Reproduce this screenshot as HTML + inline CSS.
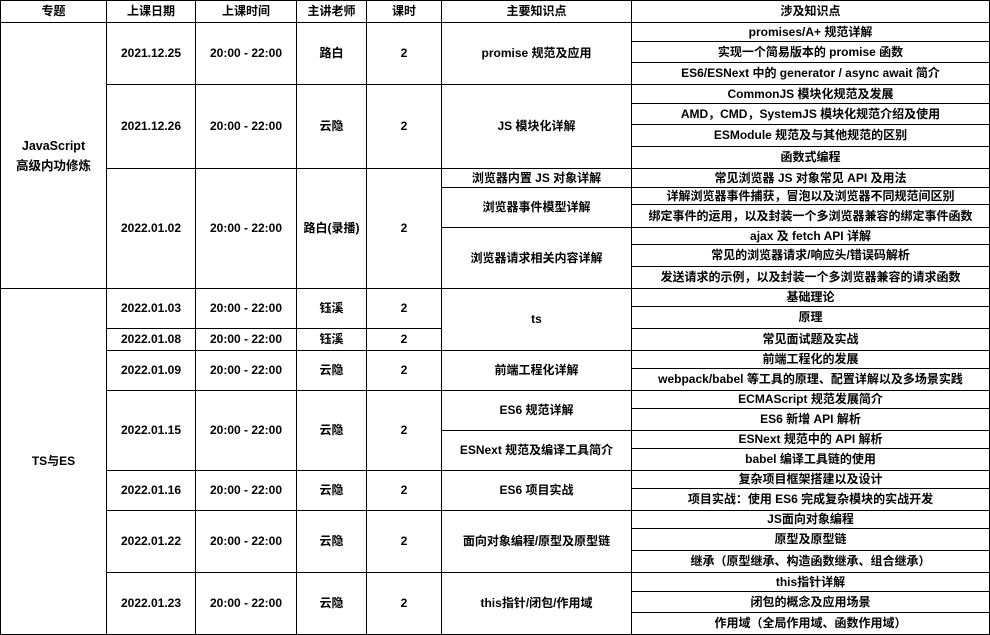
<!DOCTYPE html>
<html><head><meta charset="utf-8"><style>
body{margin:0;width:990px;height:635px;background:#fff;position:relative;overflow:hidden;font-family:"Liberation Sans","Noto Sans CJK SC",sans-serif;font-weight:bold;font-size:12px;color:#000}
.c{position:absolute;border:1px solid #000;box-sizing:border-box;display:flex;align-items:center;justify-content:center;text-align:center;line-height:19px;white-space:nowrap}
</style></head><body>
<!-- header -->
<div class="c" style="left:0;top:0;width:107px;height:23px">专题</div>
<div class="c" style="left:106px;top:0;width:90px;height:23px">上课日期</div>
<div class="c" style="left:195px;top:0;width:102px;height:23px">上课时间</div>
<div class="c" style="left:296px;top:0;width:71px;height:23px">主讲老师</div>
<div class="c" style="left:366px;top:0;width:76px;height:23px">课时</div>
<div class="c" style="left:441px;top:0;width:191px;height:23px">主要知识点</div>
<div class="c" style="left:631px;top:0;width:359px;height:23px">涉及知识点</div>
<!-- topics -->
<div class="c" style="left:0;top:22px;width:107px;height:267px;font-size:12.5px;line-height:20px">JavaScript<br>高级内功修炼</div>
<div class="c" style="left:0;top:288px;width:107px;height:347px">TS与ES</div>
<!-- date rows -->
<div class="c" style="left:106px;top:22px;width:90px;height:63px">2021.12.25</div>
<div class="c" style="left:195px;top:22px;width:102px;height:63px">20:00 - 22:00</div>
<div class="c" style="left:296px;top:22px;width:71px;height:63px">路白</div>
<div class="c" style="left:366px;top:22px;width:76px;height:63px">2</div>
<div class="c" style="left:106px;top:84px;width:90px;height:85px">2021.12.26</div>
<div class="c" style="left:195px;top:84px;width:102px;height:85px">20:00 - 22:00</div>
<div class="c" style="left:296px;top:84px;width:71px;height:85px">云隐</div>
<div class="c" style="left:366px;top:84px;width:76px;height:85px">2</div>
<div class="c" style="left:106px;top:168px;width:90px;height:121px">2022.01.02</div>
<div class="c" style="left:195px;top:168px;width:102px;height:121px">20:00 - 22:00</div>
<div class="c" style="left:296px;top:168px;width:71px;height:121px">路白(录播)</div>
<div class="c" style="left:366px;top:168px;width:76px;height:121px">2</div>
<div class="c" style="left:106px;top:288px;width:90px;height:41px">2022.01.03</div>
<div class="c" style="left:195px;top:288px;width:102px;height:41px">20:00 - 22:00</div>
<div class="c" style="left:296px;top:288px;width:71px;height:41px">钰溪</div>
<div class="c" style="left:366px;top:288px;width:76px;height:41px">2</div>
<div class="c" style="left:106px;top:328px;width:90px;height:23px">2022.01.08</div>
<div class="c" style="left:195px;top:328px;width:102px;height:23px">20:00 - 22:00</div>
<div class="c" style="left:296px;top:328px;width:71px;height:23px">钰溪</div>
<div class="c" style="left:366px;top:328px;width:76px;height:23px">2</div>
<div class="c" style="left:106px;top:350px;width:90px;height:41px">2022.01.09</div>
<div class="c" style="left:195px;top:350px;width:102px;height:41px">20:00 - 22:00</div>
<div class="c" style="left:296px;top:350px;width:71px;height:41px">云隐</div>
<div class="c" style="left:366px;top:350px;width:76px;height:41px">2</div>
<div class="c" style="left:106px;top:390px;width:90px;height:81px">2022.01.15</div>
<div class="c" style="left:195px;top:390px;width:102px;height:81px">20:00 - 22:00</div>
<div class="c" style="left:296px;top:390px;width:71px;height:81px">云隐</div>
<div class="c" style="left:366px;top:390px;width:76px;height:81px">2</div>
<div class="c" style="left:106px;top:470px;width:90px;height:41px">2022.01.16</div>
<div class="c" style="left:195px;top:470px;width:102px;height:41px">20:00 - 22:00</div>
<div class="c" style="left:296px;top:470px;width:71px;height:41px">云隐</div>
<div class="c" style="left:366px;top:470px;width:76px;height:41px">2</div>
<div class="c" style="left:106px;top:510px;width:90px;height:63px">2022.01.22</div>
<div class="c" style="left:195px;top:510px;width:102px;height:63px">20:00 - 22:00</div>
<div class="c" style="left:296px;top:510px;width:71px;height:63px">云隐</div>
<div class="c" style="left:366px;top:510px;width:76px;height:63px">2</div>
<div class="c" style="left:106px;top:572px;width:90px;height:63px">2022.01.23</div>
<div class="c" style="left:195px;top:572px;width:102px;height:63px">20:00 - 22:00</div>
<div class="c" style="left:296px;top:572px;width:71px;height:63px">云隐</div>
<div class="c" style="left:366px;top:572px;width:76px;height:63px">2</div>
<!-- main knowledge -->
<div class="c" style="left:441px;top:22px;width:191px;height:63px">promise 规范及应用</div>
<div class="c" style="left:441px;top:84px;width:191px;height:85px">JS 模块化详解</div>
<div class="c" style="left:441px;top:168px;width:191px;height:20px">浏览器内置 JS 对象详解</div>
<div class="c" style="left:441px;top:187px;width:191px;height:41px">浏览器事件模型详解</div>
<div class="c" style="left:441px;top:227px;width:191px;height:62px">浏览器请求相关内容详解</div>
<div class="c" style="left:441px;top:288px;width:191px;height:63px">ts</div>
<div class="c" style="left:441px;top:350px;width:191px;height:41px">前端工程化详解</div>
<div class="c" style="left:441px;top:390px;width:191px;height:41px">ES6 规范详解</div>
<div class="c" style="left:441px;top:430px;width:191px;height:41px">ESNext 规范及编译工具简介</div>
<div class="c" style="left:441px;top:470px;width:191px;height:41px">ES6 项目实战</div>
<div class="c" style="left:441px;top:510px;width:191px;height:63px">面向对象编程/原型及原型链</div>
<div class="c" style="left:441px;top:572px;width:191px;height:63px">this指针/闭包/作用域</div>
<!-- sub knowledge -->
<div class="c" style="left:631px;top:22px;width:359px;height:20px">promises/A+ 规范详解</div>
<div class="c" style="left:631px;top:41px;width:359px;height:22px">实现一个简易版本的 promise 函数</div>
<div class="c" style="left:631px;top:62px;width:359px;height:23px">ES6/ESNext 中的 generator / async await 简介</div>
<div class="c" style="left:631px;top:84px;width:359px;height:20px">CommonJS 模块化规范及发展</div>
<div class="c" style="left:631px;top:103px;width:359px;height:22px">AMD，CMD，SystemJS 模块化规范介绍及使用</div>
<div class="c" style="left:631px;top:124px;width:359px;height:23px">ESModule 规范及与其他规范的区别</div>
<div class="c" style="left:631px;top:146px;width:359px;height:23px">函数式编程</div>
<div class="c" style="left:631px;top:168px;width:359px;height:20px">常见浏览器 JS 对象常见 API 及用法</div>
<div class="c" style="left:631px;top:187px;width:359px;height:18px">详解浏览器事件捕获，冒泡以及浏览器不同规范间区别</div>
<div class="c" style="left:631px;top:204px;width:359px;height:24px">绑定事件的运用，以及封装一个多浏览器兼容的绑定事件函数</div>
<div class="c" style="left:631px;top:227px;width:359px;height:18px">ajax 及 fetch API 详解</div>
<div class="c" style="left:631px;top:244px;width:359px;height:23px">常见的浏览器请求/响应头/错误码解析</div>
<div class="c" style="left:631px;top:266px;width:359px;height:23px">发送请求的示例，以及封装一个多浏览器兼容的请求函数</div>
<div class="c" style="left:631px;top:288px;width:359px;height:19px">基础理论</div>
<div class="c" style="left:631px;top:306px;width:359px;height:23px">原理</div>
<div class="c" style="left:631px;top:328px;width:359px;height:23px">常见面试题及实战</div>
<div class="c" style="left:631px;top:350px;width:359px;height:19px">前端工程化的发展</div>
<div class="c" style="left:631px;top:368px;width:359px;height:23px">webpack/babel 等工具的原理、配置详解以及多场景实践</div>
<div class="c" style="left:631px;top:390px;width:359px;height:19px">ECMAScript 规范发展简介</div>
<div class="c" style="left:631px;top:408px;width:359px;height:23px">ES6 新增 API 解析</div>
<div class="c" style="left:631px;top:430px;width:359px;height:19px">ESNext 规范中的 API 解析</div>
<div class="c" style="left:631px;top:448px;width:359px;height:23px">babel 编译工具链的使用</div>
<div class="c" style="left:631px;top:470px;width:359px;height:19px">复杂项目框架搭建以及设计</div>
<div class="c" style="left:631px;top:488px;width:359px;height:23px">项目实战：使用 ES6 完成复杂模块的实战开发</div>
<div class="c" style="left:631px;top:510px;width:359px;height:19px">JS面向对象编程</div>
<div class="c" style="left:631px;top:528px;width:359px;height:23px">原型及原型链</div>
<div class="c" style="left:631px;top:550px;width:359px;height:23px">继承（原型继承、构造函数继承、组合继承）</div>
<div class="c" style="left:631px;top:572px;width:359px;height:20px">this指针详解</div>
<div class="c" style="left:631px;top:591px;width:359px;height:22px">闭包的概念及应用场景</div>
<div class="c" style="left:631px;top:612px;width:359px;height:23px">作用域（全局作用域、函数作用域）</div>
</body></html>
